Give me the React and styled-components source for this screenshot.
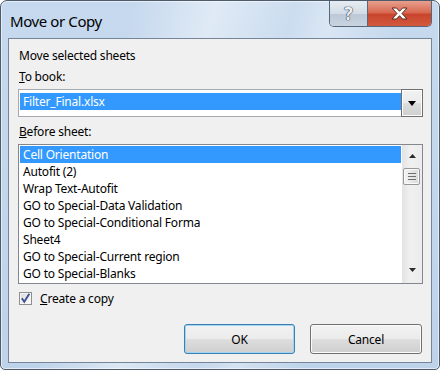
import React from 'react';
import styled, { createGlobalStyle } from 'styled-components';

const sheets = [
	'Cell Orientation',
	'Autofit (2)',
	'Wrap Text-Autofit',
	'GO to Special-Data Validation',
	'GO to Special-Conditional Forma',
	'Sheet4',
	'GO to Special-Current region',
	'GO to Special-Blanks'
];

const App = () => {
	return (
		<>
			<GlobalStyle />
			<Window>
				<TitleBar>
					<Title>Move or Copy</Title>
					<CaptionButtons>
						<HelpButton>?</HelpButton>
						<CloseButton>
							<svg width="17" height="13" viewBox="0 0 17 13">
								<path
									d="M1 1 H5.5 L8.5 4.3 L11.5 1 H16 L11 6.5 L16 12 H11.5 L8.5 8.7 L5.5 12 H1 L6 6.5 Z"
									fill="#fff"
									stroke="#5a2a22"
									strokeWidth="1"
									strokeLinejoin="round"
								/>
							</svg>
						</CloseButton>
					</CaptionButtons>
				</TitleBar>
				<Body>
					<Client>
						<Label>Move selected sheets</Label>
						<Label $gap={5}><Key>T</Key>o book:</Label>
						<Combo>
							<Selection>Filter_Final.xlsx</Selection>
							<DropButton>
								<svg width="8" height="5" viewBox="0 0 8 5">
									<path d="M0 0 H8 L4 5 Z" fill="#000" />
								</svg>
							</DropButton>
						</Combo>
						<Label $gap={7}><Key>B</Key>efore sheet:</Label>
						<ListBox>
							<ListItems>
								{sheets.map((s, i) => (
									<ListItem key={s} $selected={i === 0}>{s}</ListItem>
								))}
							</ListItems>
							<ScrollBar>
								<Arrow>
									<svg width="7" height="4" viewBox="0 0 7 4">
										<path d="M0 4 L3.5 0 L7 4 Z" fill="#2b2b2b" />
									</svg>
								</Arrow>
								<Thumb>
									<Grip />
									<Grip />
									<Grip />
								</Thumb>
								<Track />
								<Arrow $down>
									<svg width="7" height="4" viewBox="0 0 7 4">
										<path d="M0 0 L7 0 L3.5 4 Z" fill="#2b2b2b" />
									</svg>
								</Arrow>
							</ScrollBar>
						</ListBox>
						<CheckRow>
							<CheckBox>
								<svg width="11" height="11" viewBox="0 0 11 11">
									<path d="M1.8 5.2 L4.3 8.8 L9.3 0.8" fill="none" stroke="#3f5294" strokeWidth="1.9" />
								</svg>
							</CheckBox>
							<span><Key>C</Key>reate a copy</span>
						</CheckRow>
						<ButtonRow>
							<Button $default>OK</Button>
							<Button>Cancel</Button>
						</ButtonRow>
					</Client>
				</Body>
			</Window>
		</>
	);
}

const GlobalStyle = createGlobalStyle`
	html, body {
		margin: 0;
		padding: 0;
		background: #ffffff;
	}
	body {
		font-family: "Segoe UI", "Noto Sans", sans-serif;
		font-size: 12px;
		letter-spacing: -0.2px;
		color: #000;
	}
`

const Window = styled.div`
	width: 440px;
	height: 370px;
	box-sizing: border-box;
	display: flex;
	flex-direction: column;
	border: 1px solid #4d5b6a;
	border-radius: 7px 7px 5px 5px;
	overflow: hidden;
	background:
		linear-gradient(105deg, rgba(255,255,255,0) 25%, rgba(255,255,255,0.45) 40%, rgba(255,255,255,0.1) 55%, rgba(255,255,255,0.35) 62%, rgba(255,255,255,0) 75%),
		linear-gradient(180deg, #c6d9ee 0%, #bed3ea 100%);
	box-shadow: inset 0 0 0 1px rgba(255, 255, 255, 0.55);
`
const TitleBar = styled.div`
	height: 37px;
	display: flex;
	align-items: flex-start;
	padding-left: 9px;
	flex-shrink: 0;
`
const Title = styled.div`
	font-size: 15px;
	line-height: 20px;
	letter-spacing: -0.4px;
	margin-top: 10px;
	color: #000;
`
const CaptionButtons = styled.div`
	margin-left: auto;
	margin-right: 7px;
	display: flex;
	height: 25px;
	border: 1px solid #56677c;
	border-top: none;
	border-radius: 0 0 5px 5px;
	overflow: hidden;
`
const HelpButton = styled.div`
	width: 37px;
	display: flex;
	align-items: center;
	justify-content: center;
	font-size: 17px;
	font-weight: 700;
	color: #eef2f6;
	text-shadow: 0 0 1px #3a4552, 0 0 1px #3a4552, 0 0 1px #3a4552;
	background: linear-gradient(180deg, #e6ecf2 0%, #d3dce6 50%, #bcc8d6 52%, #c9d4e0 100%);
	border-right: 1px solid #56677c;
`
const CloseButton = styled.div`
	width: 63px;
	display: flex;
	align-items: center;
	justify-content: center;
	background: linear-gradient(180deg, #e7a08e 0%, #d8674f 48%, #c8452c 52%, #d2583d 100%);
`
const Body = styled.div`
	flex: 1;
	display: flex;
	padding: 0 7px 6px 7px;
`
const Client = styled.div`
	flex: 1;
	display: flex;
	flex-direction: column;
	background: #f0f0f0;
	border: 1px solid #75869a;
	padding: 9px 8px 0 9px;
`
const Label = styled.div`
	height: 16px;
	line-height: 16px;
	padding-left: 1px;
	margin-top: ${p => p.$gap || 0}px;
	white-space: nowrap;
`
const Key = styled.span`
	text-decoration: underline;
`
const Combo = styled.div`
	margin-top: 4px;
	height: 28px;
	box-sizing: border-box;
	display: flex;
	border: 1px solid #a7a9ae;
	background: #fff;
`
const Selection = styled.div`
	flex: 1;
	margin: 3px 0 0 1px;
	height: 17px;
	line-height: 17px;
	padding-left: 3px;
	background: #3399ff;
	color: #fff;
`
const DropButton = styled.div`
	width: 22px;
	margin: -1px -1px -1px 0;
	box-sizing: border-box;
	border: 1px solid #707070;
	display: flex;
	align-items: center;
	justify-content: center;
	background: linear-gradient(180deg, #f2f2f2 0%, #ebebeb 50%, #dddddd 52%, #cfcfcf 100%);
	box-shadow: inset 0 0 0 1px #fcfcfc;
`
const ListBox = styled.div`
	margin-top: 4px;
	height: 140px;
	box-sizing: border-box;
	display: flex;
	border: 1px solid #828790;
	background: #fff;
`
const ListItems = styled.div`
	flex: 1;
	padding: 1px;
	overflow: hidden;
`
const ListItem = styled.div`
	height: 17px;
	line-height: 17px;
	padding-left: 3px;
	white-space: nowrap;
	background: ${p => (p.$selected ? '#3399ff' : 'transparent')};
	color: ${p => (p.$selected ? '#fff' : '#000')};
`
const ScrollBar = styled.div`
	width: 20px;
	display: flex;
	flex-direction: column;
	background: linear-gradient(90deg, #e3e3e3 0%, #f0f0f0 40%, #ececec 100%);
`
const Arrow = styled.div`
	height: 20px;
	display: flex;
	justify-content: center;
	align-items: ${p => (p.$down ? 'flex-start' : 'flex-end')};
	padding: ${p => (p.$down ? '5px 0 0' : '0 0 7px')};
	box-sizing: border-box;
`
const Thumb = styled.div`
	margin: 3px 2px 0 1px;
	height: 17px;
	box-sizing: border-box;
	border: 1px solid #979797;
	border-radius: 2px;
	background: linear-gradient(90deg, #f3f3f3 0%, #e8e8e8 50%, #d9d9d9 100%);
	box-shadow: inset 0 0 0 1px #fafafa;
	display: flex;
	flex-direction: column;
	align-items: center;
	justify-content: center;
	gap: 2px;
`
const Grip = styled.div`
	width: 8px;
	height: 1px;
	background: #6f6f6f;
`
const Track = styled.div`
	flex: 1;
`
const CheckRow = styled.div`
	margin-top: 6px;
	height: 16px;
	display: flex;
	align-items: center;
	gap: 8px;
	padding-left: 1px;
	white-space: nowrap;
`
const CheckBox = styled.div`
	width: 13px;
	height: 13px;
	box-sizing: border-box;
	border: 1px solid #8e8f8f;
	display: flex;
	align-items: center;
	justify-content: center;
	background: linear-gradient(135deg, #d8d8d8 0%, #f0f0f0 60%, #fbfbfb 100%);
	box-shadow: inset 0 0 0 1px #f6f6f6;
`
const ButtonRow = styled.div`
	margin-top: 18px;
	display: flex;
	justify-content: flex-end;
	gap: 15px;
	padding-right: 1px;
`
const Button = styled.div`
	width: ${p => (p.$default ? 111 : 112)}px;
	height: 30px;
	box-sizing: border-box;
	display: flex;
	align-items: center;
	justify-content: center;
	border: 1px solid ${p => (p.$default ? '#3c7fb1' : '#707070')};
	border-radius: 3px;
	background: linear-gradient(180deg, #f2f2f2 0%, #ebebeb 50%, #dddddd 52%, #cfcfcf 100%);
	box-shadow: inset 0 0 0 1px ${p => (p.$default ? '#9fd5f2' : '#fbfbfb')};
`

export default App;
